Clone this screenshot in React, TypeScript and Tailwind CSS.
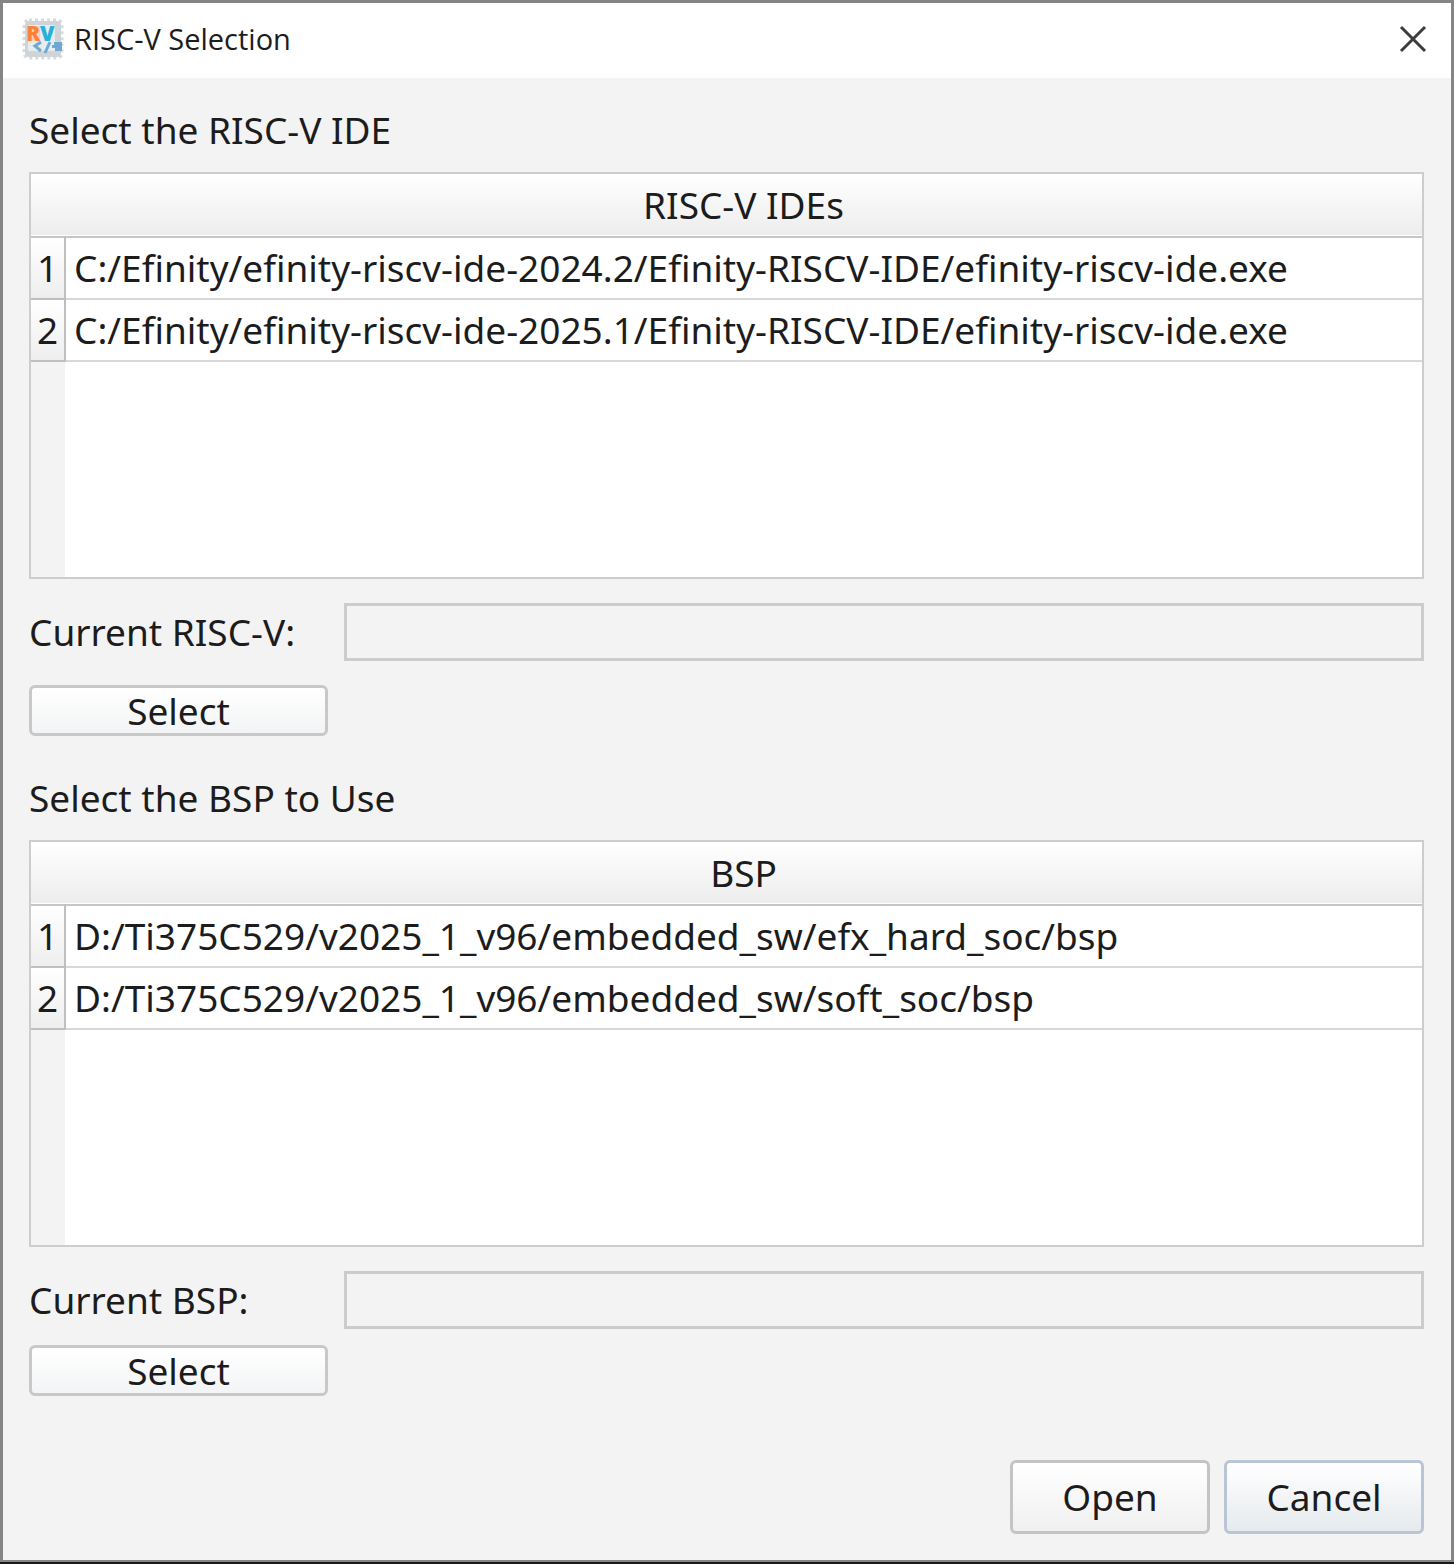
import React from 'react';

const ides = [
  'C:/Efinity/efinity-riscv-ide-2024.2/Efinity-RISCV-IDE/efinity-riscv-ide.exe',
  'C:/Efinity/efinity-riscv-ide-2025.1/Efinity-RISCV-IDE/efinity-riscv-ide.exe',
];

const bsps = [
  'D:/Ti375C529/v2025_1_v96/embedded_sw/efx_hard_soc/bsp',
  'D:/Ti375C529/v2025_1_v96/embedded_sw/soft_soc/bsp',
];

const AppIcon = () => (
  <svg width="42" height="42" viewBox="0 0 42 42" aria-hidden="true">
    <rect x="2" y="2" width="38" height="38" rx="5" fill="none" stroke="#d5dcdf" strokeWidth="3" strokeDasharray="3 3" />
    <rect x="3" y="3" width="36" height="36" rx="4" fill="#d0d4d6" />
    <rect x="6" y="7" width="27" height="26" rx="1" fill="#e6edf1" />
    <rect x="5" y="8" width="13" height="15" fill="#fbd0b8" />
    <text x="4" y="23" fontFamily="Open Sans, sans-serif" fontSize="21" fontWeight="800" fill="#fb8138">R</text>
    <text x="18" y="23" fontFamily="Open Sans, sans-serif" fontSize="21" fontWeight="800" fill="#2bb0dc">V</text>
    <g fill="none" stroke="#6fa9d2" strokeWidth="3">
      <path d="M19 24l-6 4 6 5" />
      <path d="M28 24l-5 11" />
    </g>
    <path d="M32 24h8v9h-7v-3h-3v-3h2z" fill="#6fa9d2" />
  </svg>
);

const PathTable = ({ title, rows }: { title: string; rows: string[] }) => (
  <div className="flex-1 flex flex-col border-2 border-[#cdcdcd] bg-white">
    <table className="w-full border-collapse">
      <thead>
        <tr className="h-[63px] bg-linear-to-b from-white to-[#ededee] border-b-2 border-[#c6c6c6]">
          <th colSpan={2} className="pl-[34px] font-normal text-center">{title}</th>
        </tr>
      </thead>
      <tbody>
        {rows.map((row, i) => (
          <tr key={row} className="h-[62px] border-b-2 border-[#d8d8d8]">
            <th scope="row" className="w-[34px] font-normal text-center bg-linear-to-b from-white to-[#eeeeef] border-r-2 border-b-2 border-[#bfbfbf]">
              {i + 1}
            </th>
            <td className="pl-2 whitespace-nowrap">{row}</td>
          </tr>
        ))}
      </tbody>
    </table>
    <div className="flex-1 w-[34px] bg-[#f3f3f3]" />
  </div>
);

const CurrentField = ({ id, label }: { id: string; label: string }) => (
  <div className="flex items-center">
    <label htmlFor={id} className="w-[315px] whitespace-nowrap">{label}</label>
    <input
      id={id}
      readOnly
      className="flex-1 min-w-0 h-[58px] px-2 bg-[#f3f3f3] border-3 border-[#cccccc] outline-none"
    />
  </div>
);

const SelectButton = () => (
  <button className="self-start w-[299px] h-[51px] flex items-center justify-center rounded-md border-3 border-[#c8c8c8] bg-linear-to-b from-white to-[#f3f4f5]">
    Select
  </button>
);

export default function App() {
  return (
    <div className="min-h-screen flex flex-col border-b-2 border-[#1a1a1a]">
      <div className="flex-1 flex flex-col bg-[#f3f3f3] border-3 border-b-2 border-[#858585] text-[#1c1c1c] text-[37px] leading-[56px] font-['Noto_Sans',sans-serif]">
        <header className="h-[75px] pl-[19px] pr-6 pb-1 flex items-center justify-between bg-white">
          <div className="flex items-center gap-2.5">
            <AppIcon />
            <h1 className="text-[29px] leading-9 font-['Open_Sans',sans-serif]">RISC-V Selection</h1>
          </div>
          <button aria-label="Close">
            <svg width="28" height="28" viewBox="0 0 28 28" fill="none" stroke="#3c3c3c" strokeWidth="3">
              <path d="M2 2l24 24M26 2L2 26" />
            </svg>
          </button>
        </header>

        <main className="flex-1 flex flex-col pl-[26px] pr-[27px] pt-6 pb-[26px]">
          <section className="flex-1 flex flex-col">
            <h2 className="mb-[14px]">Select the RISC-V IDE</h2>
            <PathTable title="RISC-V IDEs" rows={ides} />
            <div className="my-6">
              <CurrentField id="current-riscv" label="Current RISC-V:" />
            </div>
            <SelectButton />
          </section>

          <section className="flex-1 flex flex-col mt-[34px]">
            <h2 className="mb-[14px]">Select the BSP to Use</h2>
            <PathTable title="BSP" rows={bsps} />
            <div className="mt-6 mb-4">
              <CurrentField id="current-bsp" label="Current BSP:" />
            </div>
            <SelectButton />
          </section>

          <footer className="mt-16 flex justify-end gap-[14px]">
            <button className="w-[200px] h-[74px] rounded-md border-3 border-[#c4c4c4] bg-linear-to-b from-white to-[#f0f0f0]">
              Open
            </button>
            <button className="w-[200px] h-[74px] rounded-md border-3 border-[#b9c5d5] bg-linear-to-b from-white to-[#e6eaee]">
              Cancel
            </button>
          </footer>
        </main>
      </div>
    </div>
  );
}
